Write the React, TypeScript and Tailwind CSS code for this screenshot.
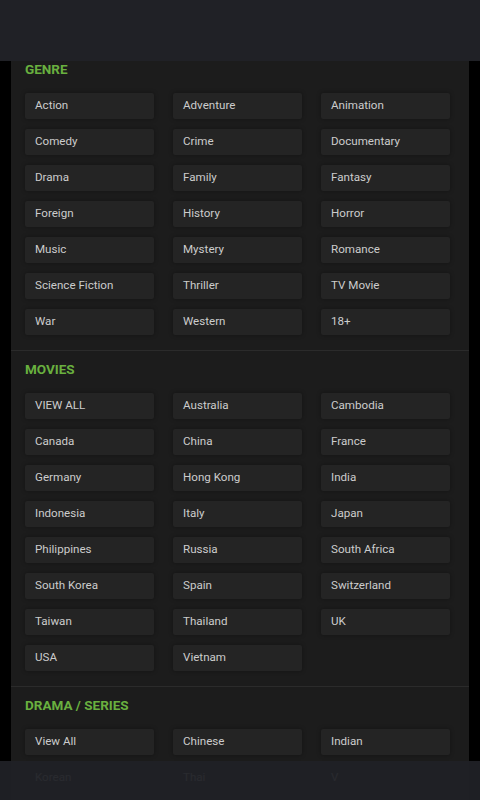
import React from 'react';

interface Section {
  title: string;
  items: string[];
}

const sections: Section[] = [
  {
    title: 'GENRE',
    items: [
      'Action', 'Adventure', 'Animation',
      'Comedy', 'Crime', 'Documentary',
      'Drama', 'Family', 'Fantasy',
      'Foreign', 'History', 'Horror',
      'Music', 'Mystery', 'Romance',
      'Science Fiction', 'Thriller', 'TV Movie',
      'War', 'Western', '18+',
    ],
  },
  {
    title: 'MOVIES',
    items: [
      'VIEW ALL', 'Australia', 'Cambodia',
      'Canada', 'China', 'France',
      'Germany', 'Hong Kong', 'India',
      'Indonesia', 'Italy', 'Japan',
      'Philippines', 'Russia', 'South Africa',
      'South Korea', 'Spain', 'Switzerland',
      'Taiwan', 'Thailand', 'UK',
      'USA', 'Vietnam',
    ],
  },
  {
    title: 'DRAMA / SERIES',
    items: ['View All', 'Chinese', 'Indian', 'Korean', 'Thai', 'V'],
  },
];

function MenuSection({ section, first, last }: { section: Section; first: boolean; last: boolean }) {
  return (
    <div className={`${first ? 'pt-0' : 'pt-[10px]'} pb-[15px] ${last ? '' : 'border-b border-[#2b2b2b]'}`}>
      <h3 className="px-[14px] text-[13.5px] leading-4 font-bold text-[#69b03f]">{section.title}</h3>
      <div className="mt-4 grid grid-cols-3 gap-x-[19px] gap-y-[10px] pl-[14px] pr-[19px]">
        {section.items.map(item => (
          <button
            key={item}
            className="h-[26px] rounded-[2px] bg-[#242424] px-[10px] text-left text-[11.6px] text-[#cccccc] shadow-[0_0_4px_rgba(0,0,0,0.35)]"
          >
            {item}
          </button>
        ))}
      </div>
    </div>
  );
}

export default function App(): React.ReactNode {
  return (
    <div className="relative h-[800px] w-[480px] overflow-hidden bg-black" style={{ fontFamily: 'Roboto, "Liberation Sans", sans-serif' }}>
      <div className="h-[61px] bg-[#202126]" />
      <div className="mx-[11px] min-h-[739px] bg-[#1c1c1c]">
        {sections.map((s, i) => (
          <MenuSection key={s.title} section={s} first={i === 0} last={i === sections.length - 1} />
        ))}
      </div>
      <div className="absolute inset-x-0 bottom-0 h-[39px] bg-[#202126]/95" />
    </div>
  );
}
